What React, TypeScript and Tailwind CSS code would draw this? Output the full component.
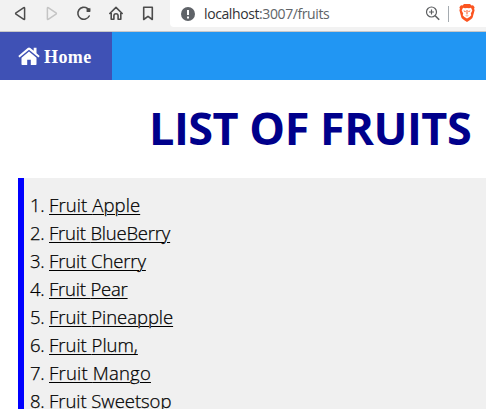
const fruits = [
  { name: 'Apple', tracking: 'tracking-[0.1px]' },
  { name: 'BlueBerry', tracking: 'tracking-[-0.2px]' },
  { name: 'Cherry', tracking: 'tracking-[-0.1px]' },
  { name: 'Pear', tracking: 'tracking-[-0.2px]' },
  { name: 'Pineapple', tracking: 'tracking-[-0.05px]' },
  { name: 'Plum,', tracking: 'tracking-[0px]' },
  { name: 'Mango', tracking: 'tracking-[0.2px]' },
  { name: 'Sweetsop', tracking: 'tracking-[-0.05px]' },
];

function BrowserBar() {
  return (
    <header className="flex h-8 shrink-0 items-start border-b border-[#c8c8c8] bg-[#f2f2f2]">
      <div className="flex h-[27px] w-[170px] shrink-0 items-center gap-4 pl-3 text-[#4c4c4c]">
        <svg className="size-4 shrink-0" viewBox="0 0 16 16" fill="none" stroke="currentColor" strokeWidth="1.5" strokeLinejoin="round">
          <path d="M12.6 2.100v10.800q0 .8-.8.5L4 8.100q-.8-.6 0-1.200l7.800-5.300q.8-.4.8.5Z" />
        </svg>
        <svg className="size-4 shrink-0 text-[#c4c4c4]" viewBox="0 0 16 16" fill="none" stroke="currentColor" strokeWidth="1.5" strokeLinejoin="round">
          <path d="M3.400 2.100v10.800q0 .8.8.5l7.800-5.300q.8-.6 0-1.200L4.200 1.600q-.8-.4-.8.5Z" />
        </svg>
        <svg className="size-4 shrink-0" viewBox="0 0 16 16" fill="none" stroke="currentColor" strokeWidth="1.6" strokeLinecap="round">
          <path d="M13.200 10A6 6 0 1 1 11.400 2.400" />
          <path d="M14.300 1.800v4.300h-4.100Z" fill="currentColor" stroke="none" />
          <circle cx="12.400" cy="4" r="2" fill="currentColor" stroke="none" />
        </svg>
        <svg className="size-4 shrink-0" viewBox="0 0 16 16" fill="none" stroke="currentColor" strokeWidth="1.600" strokeLinejoin="round" strokeLinecap="round">
          <path d="M1.800 7.500 8 1.400l6.200 6.100M3.200 6.900v6.300h2.700V9.800q0-2.100 2.100-2.100t2.100 2.100v3.400h2.700V6.900" />
        </svg>
        <svg className="size-4 shrink-0" viewBox="0 0 16 16" fill="none" stroke="currentColor" strokeWidth="1.600" strokeLinejoin="round">
          <path d="M3.700 1.300h8.600v12.200L8 10.300l-4.300 3.200Z" />
        </svg>
      </div>
      <div className="flex h-[27px] flex-1 items-center rounded-bl-[4px] bg-white pl-[11px] pr-[11px]">
        <svg className="size-[14px] shrink-0" viewBox="0 0 14 14">
          <circle cx="7" cy="7" r="7" fill="#5f6368" />
          <path d="M7 3v5M7 9.500v2" stroke="#fff" strokeWidth="2" />
        </svg>
        <span className="ml-[9px] flex-1 whitespace-nowrap font-['Open_Sans',sans-serif] text-[14px] tracking-[-0.4px] text-[#606468]">
          <span className="text-[#303236]">localhost</span>:3007/fruits
        </span>
        <svg className="size-4 shrink-0" viewBox="0 0 16 16" fill="none" stroke="#5d5f61" strokeWidth="1.200">
          <circle cx="6.500" cy="6" r="5" />
          <path d="m10.200 9.700 4 4" strokeWidth="1.600" />
          <path d="M4 6h5M6.500 3.500v5" strokeWidth="1.200" />
        </svg>
        <i className="ml-[7px] mr-[10px] h-4 w-px bg-[#a5abb0]" />
        <svg className="mb-0.5 h-[18px] w-4 shrink-0" viewBox="0 0 16 18">
          <path fill="#fb5420" d="M5 0h6l1.500 1.500L14 1.300l1.600 2-.5 1.400.5 1.600-1.900 7Q13.200 15 8 18 2.800 15 2.300 13.300L.4 6.300l.5-1.600-.5-1.400L2 1.300l1.500.2Z" />
          <path fill="#fff" d="m4 3.800 2 .5L8 4l2 .3 2-.5 1.300 2.700-1.500 3.100.5 1.600-1.700 1.700L8 14.500l-2.600-1.600-1.700-1.700.5-1.600-1.500-3.100Z" />
          <path fill="#fb5420" d="m4.300 6.500 2.500.6-.6 1.200ZM11.700 6.500l-2.500.6.600 1.200ZM7.500 6h1v4l-.5.800-.5-.8ZM6 11.300l2 .4 2-.4-2 1.300Z" />
        </svg>
      </div>
    </header>
  );
}

export default function App() {
  return (
    <div className="flex h-[409px] w-[486px] flex-col overflow-hidden bg-white font-['Open_Sans',sans-serif]">
      <BrowserBar />
      <nav className="flex h-12 shrink-0 bg-[#2196f3]">
        <a className="flex w-28 items-center bg-[#3f51b5] pl-[18px] text-white">
          <svg className="h-[19px] w-[22px] shrink-0" viewBox="0 0 22 19" fill="currentColor">
            <path d="M11 4.500 3.500 10.700v6.600q0 .7.700.7h5v-5.300h3.600V18h5q.7 0 .7-.7v-6.600Z" />
            <path d="M21.700 8.900 18.500 6.200V.8h-2.800v3L12.300 1Q11 0 9.700 1L.3 8.900l1.200 1.500L11 2.800l9.500 7.600Z" />
          </svg>
          <span className="ml-1 mt-0.5 font-['Liberation_Serif',serif] text-[18px] font-bold leading-5 tracking-[0.4px]">Home</span>
        </a>
      </nav>
      <h1 className="flex h-[98px] shrink-0 items-center whitespace-nowrap pb-0.5 pl-[149px] text-[45px] font-bold leading-[60px] tracking-[-0.5px] text-[#00008b]">
        LIST OF FRUITS
      </h1>
      <ol className="ml-[18px] flex-1 overflow-hidden border-l-[6px] border-[#0000ff] bg-[#f0f0f0] pl-[6px] pt-[13px] text-[18.500px] font-light leading-7 text-black [-webkit-text-stroke:0.25px_black]">
        {fruits.map((fruit, i) => (
          <li key={fruit.name} className="flex whitespace-nowrap">
            <span className="w-[19px] shrink-0 tracking-[-0.3px]">{i + 1}.</span>
            <a className={'underline decoration-1 underline-offset-2 ' + fruit.tracking}>Fruit {fruit.name}</a>
          </li>
        ))}
      </ol>
    </div>
  );
}
